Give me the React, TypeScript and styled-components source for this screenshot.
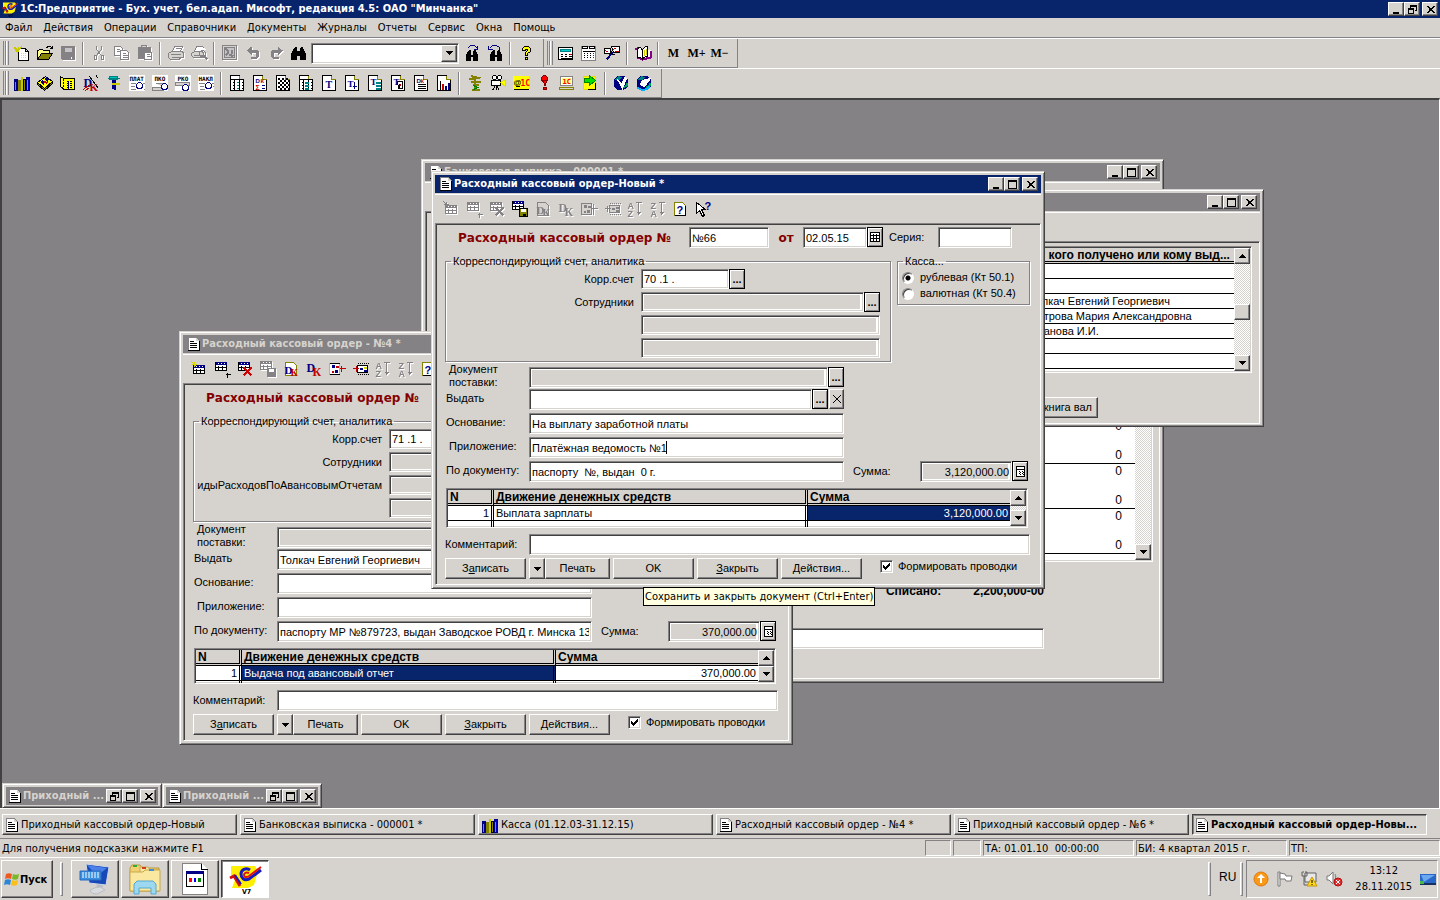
import React from "react";
import styled, { createGlobalStyle, css } from "styled-components";

const face = "#d6d3ce";
const shade = "#848284";
const dark = "#424142";
const navy = "#08246b";
const ui = `"DejaVu Sans Condensed", "Noto Sans", sans-serif`;
const form = `"Liberation Sans", sans-serif`;

const Global = createGlobalStyle`
  *, *::before, *::after { box-sizing: border-box; }
  body { margin: 0; background: ${shade}; color: #000; font: 11px/13px ${ui}; }
  button, input, select { font: inherit; color: inherit; border-radius: 0; margin: 0; }
  button { padding: 0; background: ${face}; }
  a { color: inherit; text-decoration: none; }
`;

const raised = css`
  border: 1px solid;
  border-color: #fff ${dark} ${dark} #fff;
  box-shadow: inset -1px -1px 0 ${shade};
`;
const sunken = css`
  border: 1px solid;
  border-color: ${shade} #fff #fff ${shade};
  box-shadow: inset 1px 1px 0 ${dark}, inset -1px -1px 0 ${face};
`;
const dither = css`
  background: conic-gradient(#fff 25%, ${face} 0 50%, #fff 0 75%, ${face} 0) 0 0 / 2px 2px;
`;

/* ---------- icons ---------- */

const Svg = styled.svg<{ $off?: boolean }>`
  display: block;
  flex: none;
  overflow: visible;
  ${(p) => p.$off && css`filter: drop-shadow(1px 1px 0 #fff);`}
`;

const K = "#000";
const G = "#848284";
const N = "#000084";
const R = "#c00000";
const Y = "#ffff00";
const T = "#008284";

type TextProps = { x: number; y: number; s: number; c?: string; f?: string; children: React.ReactNode };
const Letter = ({ x, y, s, c = K, f = form, children }: TextProps) => (
  <text x={x} y={y} fontSize={s} fontWeight="bold" fontFamily={f} fill={c} stroke="none">{children}</text>
);
const serif = '"Liberation Serif", serif';
const mono = '"DejaVu Sans Mono", monospace';

const page = (
  <>
    <path d="M1 0h9l4 4v11h-13z" fill="#fff" />
    <path d="M10 0v4h4" fill={face} stroke="#848200" />
  </>
);
const tableRows = (c: string, head: string) => (
  <>
    <path d="M2 2h11v8h-11z" fill="#fff" stroke={c} />
    <path d="M2 2h11M2 3h11M2 4h11" stroke={head} />
    <path d="M4 3h1M7 3h1M10 3h1" stroke="#fff" />
    <path d="M2 7h11M5 5v5M9 5v5" stroke={c} />
  </>
);
const globe = (
  <>
    <circle cx="7.5" cy="7.5" r="7.5" fill="#000084" stroke="none" />
    <path d="M2 4l3-3 3 1-2 2z" fill="#008284" stroke="#008284" />
    <path d="M10 12l3-2v-3" stroke="#00a060" strokeWidth="2" />
  </>
);
const binoculars = (
  <path d="M2 8l2-3h2v4h3V5h2l2 3v6H9v-4H6v4H2z M4 4h2 M9 4h2" fill={K} />
);
const slip = <rect x="-.5" y="-.5" width="16" height="16" fill="#fff" stroke="none" />;
const sheet = (body: React.ReactNode) => (
  <>
    {page}
    {body}
  </>
);

const art: Record<string, React.ReactNode> = {
  new: (<><path d="M4 3h7l3 3v9h-10z M11 3v3h3" fill="#fff" /><path d="M6 8h6M6 10h6M6 12h6" stroke={face} strokeDasharray="1 1" /><path d="M0 2l4 4M4 1v4M7 1l-3 4M0 5h4M2 7l2-2" stroke="#c8c800" strokeWidth="1.5" /></>),
  open: (<><path d="M0 14V5h1l1-1h3l1 1h6v3" fill="#ffff84" stroke={K} /><path d="M0 14l4-6h11l-4 6z" fill="#848200" stroke={K} /><path d="M9 2l2-1h2l2 2M15 0v3h-3" /></>),
  save: (<><path d="M1 1h13v13h-12l-1-1z" fill={G} stroke={G} /><path d="M4 2h7v4h-7z" fill="#c6c3c6" stroke="none" /><path d="M11 11v2" stroke="#fff" /></>),
  cut: (<g stroke={G}><path d="M5 0v4l5 6M10 0v4l-5 6" /><path d="M3 10h2v4h-2zM10 10h2v4h-2z" /></g>),
  copy: (<g stroke={G}><path d="M0 1h6l2 2v7h-8zM2 4h3M2 6h4" fill="#fff" /><path d="M6 5h6l2 2v7h-8zM8 8h3M8 10h5M8 12h5" fill="#fff" /></g>),
  paste: (<g stroke={G}><path d="M1 2h12v11h-12z" fill={G} /><path d="M4 0h5v2h-5z" fill={face} /><path d="M7 7h7v7h-7zM9 9h3M9 11h4" fill="#fff" /></g>),
  print: (<g stroke={G}><path d="M4 6l2-5h8l-2 5M7 3h5" fill="#fff" /><path d="M0 8l3-2h11l1 2v4h-3l-1 2h-9l-2-2z" fill={face} /><path d="M2 9h10M3 12h8" strokeWidth="1" /></g>),
  preview: (<g stroke={G}><path d="M3 6l2-5h6l2 2" fill="#fff" /><path d="M0 8l3-2h8l1 2v4h-10l-2-2zM2 10h9" fill={face} /><circle cx="11" cy="8" r="3" /><path d="M13 11l3 3" strokeWidth="2" /></g>),
  frame: (<g stroke={G}><path d="M0 0h14v14h-14z" fill={face} /><path d="M2 2h10v10h-10z" fill="#c6c3c6" /><path d="M3 3l2 2v3l-2 2M9 4v4M7 9l4 2" strokeWidth="2" /></g>),
  undo: (<path d="M1 5l5-4v3h5l2 2v5l-2 2h-6v-2h5v-4h-4v3z" stroke="none" fill={G} />),
  redo: (<path d="M14 5l-5-4v3h-5l-2 2v5l2 2h6v-2h-5v-4h4v3z" stroke="none" fill={G} />),
  find: <g transform="translate(-1 0)"><path d="M1 9l3-6h2v3h4V3h2l3 6v5h-5v-4H6v4H1z M4 2h2 M10 2h2" fill={K} /></g>,
  findNext: (<><g transform="translate(0 1)">{binoculars}</g><path d="M3 3l3-3h4l3 3M13 0v4h-4" stroke={N} /></>),
  findPrev: (<><g transform="translate(1 1)">{binoculars}</g><path d="M12 4V2l-3-2H5L2 3M1 0v4h4" stroke={N} /></>),
  help: (<><path d="M4 5V3l2-2h4l2 2v3l-3 2v2H7V7l2-2V4H7v1z" fill={Y} /><path d="M7 12h2v2h-2z" fill={Y} /></>),
  calc: (<><path d="M0 2h14v12h-14z" fill="#fff" /><path d="M2 4h10v2h-10z" fill="#00d0d0" stroke={T} /><path d="M2 9h2M6 9h2M10 9h3M2 11h2M6 11h2M10 11h3M2 13h11" /><path d="M11 9h2" stroke={R} /></>),
  calc2: (<><path d="M0 1h14v14h-14z" fill="#fff" stroke={G} /><path d="M1 1h5v2h-5zM8 1h5v2h-5zM1 6h12" /><path d="M2 8h1M5 8h1M8 8h1M2 10h1M5 10h1M8 10h1M2 12h1M5 12h1M8 12h1" /><path d="M11 8h1M11 10h1M11 12h1" stroke={R} /></>),
  tools: (<><path d="M0 3h6v5h-6zM7 1h8v6h-6z" fill="#fff" /><path d="M1 5l3 2M9 4l3-2M10 6h4" stroke={R} /><path d="M8 7l-6 7" stroke={N} strokeWidth="2" /><path d="M3 8l8 1M6 5l2 2" /></>),
  book: (<><path d="M0 4l2-1v9l5 2 8-2V5" fill="#fff" stroke="#840084" strokeWidth="2" /><path d="M2 3c3-2 4 0 5 2v9c-1-2-3-3-5-2zM7 5c1-3 3-4 5-4v10c-2 0-4 1-5 3z" fill="#fff" /><path d="M9 4v6M11 3v6" stroke="#d0d000" /></>),

  shelf: (<><path d="M0 4h3v11h-3z" fill={N} stroke={N} /><path d="M4 5h2v10h-2z" fill="#848200" stroke="#848200" /><path d="M7 2h1v13h-1z" fill={Y} stroke="#c8c800" /><path d="M9 4h2v11h-2z" fill="#848200" /><path d="M12 2h3v13h-3z" fill="#0000c6" stroke={N} /><path d="M1 6v8M13 4v10" stroke="#00c0c0" /></>),
  cubes: (<><path d="M0 7l8-6 7 5-8 7z" fill="#ffff00" /><path d="M0 7v2l7 6 8-7V6l-8 7z" fill="#848200" /><path d="M4 6l3 2M8 3l3 2" stroke={N} strokeWidth="3" /><path d="M7 6l3 2" stroke={R} strokeWidth="2" /></>),
  journal: (<><path d="M0 1l3 2h11v11h-10l-4-3z" fill="#ffff00" /><path d="M3 3v11M6 6h6M6 8h6M6 10h6M6 12h6" strokeDasharray="2 1" /><path d="M8 5v8" stroke={N} /></>),
  dkPen: (<><Letter x={0} y={11} s={12} c={N} f={serif}>D</Letter><Letter x={6} y={15} s={11} c={R} f={serif}>K</Letter><path d="M6 1l9 12M13 0l1 3" /><path d="M0 14l6-5M2 15l4-3" stroke={R} /></>),
  plan: (<><path d="M1 3h12M3 1h8v3h-8z" fill="#00c0c0" stroke="#008284" /><path d="M6 4v9M8 4v10" stroke={N} strokeWidth="2" /><path d="M5 8h8" stroke="#c8c800" strokeWidth="2" /></>),
  plat: <>{slip}<Letter x={0} y={5} s={6} f={mono}>ПЛАТ</Letter><path d="M1 8h5M1 11h4M1 14h5M13 8h2M14 14h1" stroke={G} /><circle cx="10" cy="10" r="3" stroke={N} /></>,
  pko: <>{slip}<Letter x={2} y={5} s={6} f={mono}>ПКО</Letter><path d="M0 12h11v3h-11zM3 8h7v3" stroke={G} fill={face} /><circle cx="12" cy="11" r="3" stroke={N} fill="#fff" /></>,
  rko: <>{slip}<Letter x={2} y={5} s={6} f={mono}>РКО</Letter><path d="M0 7h14v3h-14z" stroke={G} fill={face} /><circle cx="10" cy="12" r="3" stroke={N} fill="#fff" /></>,
  nakl: <>{slip}<Letter x={0} y={5} s={6} f={mono}>НАКЛ</Letter><path d="M0 8h6M1 11h4M1 14h5M13 8h2M14 11h1" stroke={G} /><circle cx="10" cy="10" r="3" stroke={N} /></>,

  r1: sheet(<><path d="M1 4h13M5 4v11M10 4v11M3 7h1M3 10h1M3 13h1M12 7h1M12 10h1M12 13h1" /><path d="M7 7h2M7 10h2M7 13h2" stroke={T} /></>),
  r2: sheet(<><Letter x={3} y={7} s={6} c={N}>D</Letter><Letter x={8} y={7} s={6} c={R}>К</Letter><Letter x={3} y={14} s={7} c={R}>Σ</Letter><path d="M9 10h3M9 13h3" stroke={N} /></>),
  r3: sheet(<><path d="M2 3h12M2 7h12M2 11h12" strokeDasharray="2 2" strokeWidth="2" /><path d="M4 5h10M4 9h10M4 13h10" strokeDasharray="2 2" strokeWidth="2" /></>),
  r4: sheet(<><path d="M1 4h13M5 4v11M10 4v11" /><path d="M6 7h4M6 10h4M6 13h4" stroke={T} strokeWidth="2" /><path d="M3 7h1M3 10h1M3 13h1M12 7h1M12 10h1M12 13h1" /></>),
  r5: sheet(<Letter x={4} y={12} s={10} c={N} f={serif}>T</Letter>),
  r6: sheet(<><Letter x={3} y={11} s={9} c={N} f={serif}>T</Letter><path d="M10 6v7M8 11h4" stroke={N} /></>),
  r7: sheet(<><Letter x={3} y={9} s={9} c={N} f={serif}>T</Letter><path d="M8 7h5M8 10h5M8 13h5" stroke={T} strokeWidth="2" /></>),
  r8: sheet(<><Letter x={3} y={9} s={9} c={N} f={serif}>T</Letter><path d="M7 6h5v7h-4zM9 8v5" /><path d="M10 8v2" stroke={R} /></>),
  r9: sheet(<><Letter x={3} y={7} s={6} c={N}>D</Letter><Letter x={7} y={7} s={6} c={R}>К</Letter><path d="M4 9h8M4 11h8M4 13h8" /></>),
  r10: sheet(<><path d="M4 5v9" /><path d="M6 8v6" stroke={R} strokeWidth="2" /><path d="M9 10v4M12 7v7" stroke={N} strokeWidth="2" /></>),

  caduceus: (<><path d="M7 0v15" stroke="#848200" strokeWidth="2" /><path d="M1 3h5l-1-2 4 1 4 1M3 6h10M5 9h6M4 14h8" stroke="#848200" strokeWidth="2" /><path d="M6 10l4 2-4 2" stroke="#008200" /></>),
  camera: (<><circle cx="4" cy="2" r="2" fill="#fff" /><circle cx="9" cy="2" r="2" fill="#fff" /><path d="M1 5h9v5h-9z" fill="#fff" /><path d="M10 7l5-3v7z" fill={Y} stroke="#e0e000" /><path d="M5 10l-3 5M6 10l3 5M6 10v4" /></>),
  mail1c: (<><rect x="-.5" y="0" width="16" height="13" fill={Y} stroke="none" /><Letter x={0} y={9} s={8}>@</Letter><Letter x={7} y={10} s={8} f={mono} c="#ff0000">1С</Letter><path d="M0 14h15M2 11h4" /></>),
  bang: (<><circle cx="8" cy="3" r="3" fill="#ff0000" stroke="#840000" /><path d="M7 5h3l-1 5h-1z" fill="#ff0000" stroke="#840000" /><path d="M7 12h3v2h-3z" fill="#ff0000" stroke="#840000" /></>),
  pc: (<><path d="M1 1h12v9h-12z" fill="#fff" stroke={G} /><path d="M3 3h8v5h-8z" fill="#ffff84" stroke="#ffff84" /><Letter x={3} y={8} s={7} c="#ff0000" f={mono}>1С</Letter><path d="M0 12h14v2h-14z" fill={face} stroke="#848200" /></>),
  exportArrow: (<><path d="M1 1h12v13h-12z" fill={Y} stroke="#e0e000" /><path d="M2 3h5V0l6 5-6 5V7H2z" fill="#00e000" stroke="#008200" /><path d="M13 7v7h-8" stroke={K} /></>),
  globe1: (<>{globe}<path d="M4 4l4 5 3-7 2 1-4 10z" fill="#fff" stroke="#fff" /></>),
  globe2: (<>{globe}<path d="M4 9l4 2 6-8-8 2z" fill="#fff" stroke="#fff" /><path d="M1 12c4 4 9 3 12-1" stroke="#00b0ff" strokeWidth="2" /></>),

  insert: (<><g transform="translate(0 2)">{tableRows(K, N)}</g><path d="M0 0l5 5M3 0v5M0 3h5" stroke="#d8d800" /></>),
  insertOff: (<><g transform="translate(0 2)">{tableRows(G, G)}</g><path d="M0 0l5 5M3 0v5M0 3h5" stroke={G} /></>),
  add: (<><g transform="translate(-1 -1)">{tableRows(K, N)}</g><path d="M11 13h5M13 11v5" /></>),
  addOff: (<><g transform="translate(-1 -1)">{tableRows(G, G)}</g><path d="M11 13h5M13 11v5" stroke={G} /></>),
  del: (<><g transform="translate(-1 -1)">{tableRows(K, N)}</g><path d="M6 6l8 8M14 6l-8 8" stroke="#d00000" strokeWidth="2" /></>),
  delOff: (<><g transform="translate(-1 -1)">{tableRows(G, G)}</g><path d="M6 6l8 8M14 6l-8 8" stroke={G} strokeWidth="2" /></>),
  store: (<><g transform="translate(-2 -2)">{tableRows(K, N)}</g><path d="M7 7h8v8h-8z" fill="#848200" /><path d="M9 8h4v2h-4z" fill="#fff" stroke="#fff" /><path d="M10 13h3" strokeWidth="2" /></>),
  storeOff: (<><g transform="translate(-2 -2)">{tableRows(G, G)}</g><path d="M7 7h8v8h-8z" fill={G} stroke={G} /><path d="M9 8h4v2h-4z" fill="#fff" stroke="#fff" /></>),
  dkDoc: (<><path d="M2 1h8l3 3v10h-11z" fill="#fff" stroke="#848200" /><Letter x={1} y={12} s={11} c={N} f={serif}>D</Letter><Letter x={7} y={14} s={10} c={R} f={serif}>К</Letter></>),
  dkDocOff: (<><path d="M2 1h8l3 3v10h-11z" fill={face} stroke={G} /><Letter x={1} y={12} s={11} c={G} f={serif}>D</Letter><Letter x={7} y={14} s={10} c={G} f={serif}>К</Letter></>),
  dk: (<><Letter x={0} y={10} s={12} c={N} f={serif}>D</Letter><Letter x={6} y={14} s={12} c={R} f={serif}>К</Letter></>),
  dkOff: (<><Letter x={0} y={10} s={12} c={G} f={serif}>D</Letter><Letter x={6} y={14} s={12} c={G} f={serif}>К</Letter></>),
  from: (<><path d="M0 2h10v11h-10z" fill="#fff" stroke="#c8c800" /><path d="M0 2h10M0 13h10" /><path d="M2 5h3M5 10h3" stroke={N} strokeWidth="3" /><path d="M6 5h3M2 10h2" stroke={R} strokeWidth="2" /><path d="M10 7h6M12 4v6" stroke={R} /></>),
  fromOff: (<g stroke={G}><path d="M0 2h10v11h-10z" fill={face} /><path d="M2 5h3M5 10h3" strokeWidth="3" /><path d="M6 5h3M2 10h2" strokeWidth="2" /><path d="M10 7h6M12 2v11" /></g>),
  to: (<><path d="M5 2h11M5 13h11" strokeDasharray="1 1" /><path d="M5 4h10v7h-10z" fill="#fff" /><path d="M7 7h3M11 9h3" stroke={N} strokeWidth="2" /><path d="M11 6h3" stroke="#d8d800" strokeWidth="2" /><path d="M0 7h6M4 4v6" stroke={R} /></>),
  toOff: (<g stroke={G}><path d="M5 2h11M5 13h11" strokeDasharray="1 1" /><path d="M5 4h10v7h-10z" fill={face} /><path d="M7 7h3M11 9h3M11 6h3" strokeWidth="2" /><path d="M0 7h6M3 4v6" /></g>),
  azOff: (<><Letter x={0} y={7} s={9} c={G}>A</Letter><Letter x={0} y={15} s={9} c={G}>Z</Letter><path d="M8 1h6M11 1v12M9 11h4M10 12h2" stroke={G} /></>),
  zaOff: (<><Letter x={0} y={7} s={9} c={G}>Z</Letter><Letter x={0} y={15} s={9} c={G}>A</Letter><path d="M8 1h6M11 1v12M9 11h4M10 12h2" stroke={G} /></>),
  helpDoc: (<><path d="M1 1h8l3 3v10h-11z" fill="#fff" stroke="#848200" /><path d="M12 4v10h-11" /><Letter x={3} y={12} s={11} c={N}>?</Letter></>),
  helpPtr: (<><path d="M0 1v11l3-3 3 6 2-1-3-6h4z" fill="#fff" /><Letter x={8} y={8} s={11} c={N}>?</Letter></>),
};

const names: Record<string, string> = {
  new: "Новый", open: "Открыть", save: "Сохранить", cut: "Вырезать", copy: "Копировать", paste: "Вставить",
  print: "Печать", preview: "Просмотр", find: "Найти", help: "Помощь", calc: "Калькулятор", undo: "Отменить", redo: "Вернуть",
};

const IconButton = styled.button`
  width: 23px;
  height: 24px;
  border: 0;
  display: grid;
  place-items: center;
`;

const Tool = ({ name, off }: { name: string; off?: boolean }) => (
  <IconButton type="button" aria-label={names[name] ?? name}>
    <Svg width="16" height="16" viewBox="-0.5 -0.5 16 16" fill="none" stroke="#000" shapeRendering="crispEdges" $off={off}>
      {art[name]}
    </Svg>
  </IconButton>
);

const DocIcon = () => (
  <Svg width="12" height="14" viewBox="0 0 12 14" shapeRendering="crispEdges">
    <path d="M0 0h8l4 4v10h-12z" fill={G} />
    <path d="M1 1h7v3h3v9h-10z" fill="#fff" />
    <path d="M8 1h1v1h1v1h1v1h-3z" fill={face} />
    <path d="M11 4h1v10h-12v-1h11z" fill="#000" />
    <path d="M2 4h4v1h-4zM2 6h7v1h-7zM2 8h7v1h-7zM2 10h7v1h-7z" fill="#000" />
  </Svg>
);

const BooksIcon = () => (
  <Svg width="16" height="16" viewBox="-0.5 -0.5 16 16" fill="none" stroke="#000" shapeRendering="crispEdges">{art.shelf}</Svg>
);

const OneC = ({ size }: { size: number }) => (
  <Svg width={size} height={size} viewBox="0 0 32 32">
    <path d="M2 3h24l3 5-4 14-6 3H3l3-8-4-5z" fill="#ffef00" />
    <path d="M1 15l4-2 6 10" fill="none" stroke="#d01010" strokeWidth="3" />
    <path d="M6 12l6 9" fill="none" stroke="#1818c0" strokeWidth="2" />
    <path d="M21 7c-4-3-9 0-9 4s3 7 8 5l12-9" fill="none" stroke="#1818c0" strokeWidth="3" />
    <path d="M20 10c-3-1-5 0-5 2s2 3 5 1l12-9" fill="none" stroke="#e01010" strokeWidth="2" />
    <text x="13" y="31" fontSize="7" fontWeight="bold" fontFamily={ui} fill="#000">V7</text>
  </Svg>
);

/* ---------- application frame ---------- */

const Shell = styled.div`
  min-height: 100vh;
  display: flex;
  flex-direction: column;
  background: ${face};
  overflow: hidden;
`;

const AppTitle = styled.header`
  height: 18px;
  padding: 0 2px;
  display: flex;
  align-items: center;
  gap: 2px;
  background: ${navy};
  color: #fff;
  h1 { margin: 0; flex: 1; font-size: 11px; line-height: 18px; font-weight: bold; white-space: nowrap; }
`;

const Controls = styled.div`
  display: flex;
  button:last-child { margin-left: 2px; }
`;

const ControlButton = styled.button`
  ${raised}
  width: 16px;
  height: 14px;
  display: grid;
  place-items: center;
`;

const controlPaths = {
  min: "M2 8h6v2h-6z",
  max: "M1 1h9v9h-9zM2 3v6h7v-6z",
  restore: "M3 1h7v6h-2v-1h1v-3h-5v1h-1zM1 4h6v6h-6zM2 6v3h4v-3z",
  close: "M1 2h2l2 2h1l2-2h2l-3 3v1l3 3h-2l-2-2h-1l-2 2h-2l3-3v-1z",
};
const controlNames = { min: "Свернуть", max: "Развернуть", restore: "Восстановить", close: "Закрыть" };

const WindowControls = ({ kinds }: { kinds: (keyof typeof controlPaths)[] }) => (
  <Controls>
    {kinds.map((k) => (
      <ControlButton type="button" key={k} aria-label={controlNames[k]}>
        <Svg width="11" height="11" viewBox="0 0 11 11" shapeRendering="crispEdges">
          <path d={controlPaths[k]} fillRule="evenodd" fill="#000" />
        </Svg>
      </ControlButton>
    ))}
  </Controls>
);

const MenuBar = styled.nav`
  height: 20px;
  padding-left: 5px;
  display: flex;
  gap: 11px;
  line-height: 20px;
  border-bottom: 1px solid ${shade};
`;

const ToolRow = styled.div`
  display: flex;
  height: 30px;
  border-top: 1px solid #fff;
`;

const Band = styled.div`
  display: flex;
  align-items: center;
  height: 29px;
  padding: 0 6px 0 10px;
  border-right: 1px solid ${shade};
  border-bottom: 1px solid ${shade};
  position: relative;
  &::before {
    content: "";
    position: absolute;
    left: 3px;
    top: 2px;
    bottom: 2px;
    width: 6px;
    border: solid;
    border-width: 0 1px;
    border-color: #fff ${shade};
    background: linear-gradient(90deg, ${face} 1px, ${shade} 1px 2px, #fff 2px 3px, ${face} 3px);
  }
`;

const Divider = styled.span`
  width: 2px;
  height: 23px;
  margin: 0 3px;
  border-left: 1px solid ${shade};
  border-right: 1px solid #fff;
`;

const ComboBox = styled.div`
  ${sunken}
  width: 148px;
  height: 21px;
  padding: 1px;
  display: flex;
  background: #fff;
  margin: 0 1px;
  input { flex: 1; min-width: 0; border: 0; background: none; outline: 0; padding: 0 2px; }
  button { ${raised} width: 16px; display: grid; place-items: center; }
`;

const MemButton = styled.button`
  width: 23px;
  height: 24px;
  border: 0;
  font: bold 12px/24px "Liberation Serif", serif;
`;

const Arrow = ({ up }: { up?: boolean }) => (
  <Svg width="7" height="4" viewBox="0 0 7 4" shapeRendering="crispEdges">
    <path d={up ? "M3 0h1v1h1v1h1v1h1v1h-7v-1h1v-1h1v-1h1z" : "M0 0h7v1h-1v1h-1v1h-1v1h-1v-1h-1v-1h-1v-1h-1z"} fill="#000" />
  </Svg>
);

const Desktop = styled.main`
  position: relative;
  flex: 1;
  min-height: 710px;
  background: ${shade};
  border: solid;
  border-width: 2px 1px 0 2px;
  border-color: ${dark} #fff ${face} ${dark};
  overflow: hidden;
`;

/* ---------- child windows ---------- */

const Frame = styled.section<{ $x: number; $y: number; $w: number; $h?: number }>`
  position: absolute;
  left: ${(p) => p.$x}px;
  top: ${(p) => p.$y}px;
  width: ${(p) => p.$w}px;
  height: ${(p) => (p.$h ? p.$h + "px" : "auto")};
  display: flex;
  flex-direction: column;
  padding: 3px;
  background: ${face};
  border: 1px solid;
  border-color: ${face} ${dark} ${dark} ${face};
  box-shadow: inset 1px 1px 0 #fff, inset -1px -1px 0 ${shade};
`;

const Caption = styled.header<{ $active?: boolean }>`
  flex: none;
  height: 18px;
  padding: 0 3px 0 5px;
  display: flex;
  align-items: center;
  gap: 2px;
  background: ${(p) => (p.$active ? navy : shade)};
  color: ${(p) => (p.$active ? "#fff" : face)};
  h2 { margin: 0; flex: 1; min-width: 0; font-size: 11px; line-height: 18px; font-weight: bold; white-space: nowrap; overflow: hidden; }
`;

const InnerTools = styled.div`
  flex: none;
  height: 29px;
  margin-top: 1px;
  padding-left: 4px;
  display: flex;
  align-items: center;
  border-top: 1px solid #fff;
`;

const Client = styled.div`
  flex: 1;
  display: flex;
  flex-direction: column;
  padding: 3px 10px 5px 9px;
  border: 1px solid;
  border-color: ${shade} #fff #fff ${shade};
  box-shadow: inset 1px 1px 0 ${dark};
  font: 11px/13px ${form};
`;

/* ---------- form parts ---------- */

const Input = styled.input<{ $locked?: boolean; $w?: number; $right?: boolean }>`
  ${sunken}
  height: 21px;
  min-width: 0;
  width: ${(p) => (p.$w ? p.$w + "px" : "auto")};
  flex: ${(p) => (p.$w ? "none" : "1")};
  padding: 1px 2px;
  outline: 0;
  background: #fff;
  text-align: ${(p) => (p.$right ? "right" : "left")};
  ${(p) => p.$locked && css`
    background: ${face};
    box-shadow: inset 1px 1px 0 ${dark}, inset -1px -1px 0 ${face}, inset 2px 2px 0 #fff, inset -3px -2px 0 #fff;
  `}
`;

const Combo = styled.div<{ $w?: number }>`
  display: flex;
  width: ${(p) => (p.$w ? p.$w + "px" : "auto")};
`;

const PickButton = styled.button`
  width: 16px;
  height: 20px;
  border: 1px solid #000;
  box-shadow: inset 1px 1px 0 #fff, inset -1px -1px 0 ${shade};
  display: grid;
  place-items: center;
  font-weight: bold;
  line-height: 14px;
`;

const ClearButton = styled.button`
  ${raised}
  width: 15px;
  height: 20px;
  margin-left: 1px;
  display: grid;
  place-items: center;
`;

const Calendar = () => (
  <Svg width="10" height="10" viewBox="-0.5 -0.5 10 10" shapeRendering="crispEdges" fill="#fff" stroke="#000">
    <path d="M0 0h9v9h-9zM0 3h9M0 6h9M3 1v8M6 1v8" />
  </Svg>
);
const Calc = () => (
  <Svg width="9" height="11" viewBox="-0.5 -0.5 9 11" shapeRendering="crispEdges" fill="#fff" stroke="#000">
    <path d="M0 0h8v10h-8zM0 3h8M2 5h1M5 5h1M2 7h1M5 7h1M3 6h1M6 6h1M3 8h1M6 8h1" />
  </Svg>
);

const HeadRow = styled.div`
  display: flex;
  align-items: center;
  height: 21px;
`;
const DocTitle = styled.label`
  width: 244px;
  padding-left: 13px;
  white-space: nowrap;
  font: bold 12px/16px "DejaVu Sans", sans-serif;
  color: #840000;
`;
const From = styled.label`
  width: 34px;
  text-align: center;
  font: bold 12px/16px "DejaVu Sans", sans-serif;
  color: #840000;
`;
const SeriesLabel = styled.label`
  width: 55px;
  padding-left: 6px;
`;

const Groups = styled.div`
  display: flex;
  align-items: flex-start;
  gap: 6px;
  margin: 7px 0 3px;
`;
const Group = styled.fieldset`
  margin: 0;
  min-width: 0;
  padding: 0;
  border: 1px solid ${shade};
  box-shadow: inset 1px 1px 0 #fff, 1px 1px 0 #fff;
  legend { margin-left: 5px; padding: 0 2px; line-height: 13px; }
`;
const AccountGroup = styled(Group)`width: 446px;`;
const AccountGrid = styled.div`
  display: grid;
  grid-template-columns: 188px 1fr;
  gap: 3px 7px;
  align-items: center;
  padding: 1px 10px 3px 0;
  label { text-align: right; white-space: nowrap; }
  input { height: 20px; width: 100%; }
`;
const CashGroup = styled(Group)`flex: 1;`;
const Radios = styled.div`
  display: grid;
  gap: 3px;
  padding: 3px 4px 4px;
`;
const Choice = styled.label`
  display: flex;
  align-items: center;
  gap: 6px;
  white-space: nowrap;
`;
const Radio = styled.input`
  appearance: none;
  width: 12px;
  height: 12px;
  border-radius: 50%;
  border: 1px solid;
  border-color: ${shade} #fff #fff ${shade};
  background: #fff;
  box-shadow: inset 1px 1px 0 ${dark};
  &:checked { background: radial-gradient(circle, #000 2px, #fff 3px); }
`;

const Rows = styled.div`
  display: grid;
  gap: 3px;
`;
const Row = styled.div`
  display: grid;
  grid-template-columns: 84px 315px auto 1fr;
  align-items: center;
  height: 21px;
`;
const RowLabel = styled.label<{ $in?: boolean }>`
  padding-left: ${(p) => (p.$in ? 4 : 1)}px;
  margin-top: -2px;
`;
const Cell = styled.div`
  display: flex;
  position: relative;
`;
const Caret = styled.span`
  position: absolute;
  left: 137px;
  top: 4px;
  width: 1px;
  height: 13px;
  background: #000;
`;
const SumLabel = styled.label`
  padding-left: 9px;
`;
const SumBox = styled(Combo)`
  justify-self: end;
  margin-right: 2px;
`;

const GridFrame = styled.div<{ $h: number }>`
  ${sunken}
  height: ${(p) => p.$h}px;
  padding: 1px;
  display: flex;
  overflow: hidden;
  background: #fff;
`;
const FormGrid = styled(GridFrame)`margin: 6px 2px 6px 1px;`;

const Grid = styled.table`
  flex: 1;
  min-width: 0;
  align-self: flex-start;
  table-layout: fixed;
  border-collapse: separate;
  border-spacing: 0;
  th, td { padding: 0 2px; text-align: left; white-space: nowrap; overflow: hidden; }
  th { height: 16px; background: ${face}; font-size: 12px; line-height: 12px; border-bottom: 3px double #000; }
  td { height: 15px; line-height: 14px; border-bottom: 1px solid #000; }
  th:not(:last-child), td:not(:last-child) { border-right: 3px double #000; }
`;
const Td = styled.td<{ $on?: boolean }>`
  && { text-align: ${(p) => (p.align === "right" ? "right" : "left")}; }
  ${(p) => p.$on && css`background: ${navy}; color: #fff;`}
`;

const Track = styled.div`
  ${dither}
  width: 16px;
  flex: none;
  display: flex;
  flex-direction: column;
`;
const ScrollButton = styled.button`
  ${raised}
  flex: none;
  height: 16px;
  display: grid;
  place-items: center;
`;
const Thumb = styled.div`
  ${raised}
  height: 16px;
  background: ${face};
`;
const Space = styled.span<{ $n: number }>`flex: ${(p) => p.$n};`;

const Scroll = ({ before, after }: { before?: number; after?: number }) => (
  <Track>
    <ScrollButton type="button" aria-label="Вверх"><Arrow up /></ScrollButton>
    <Space $n={before ?? 1} />
    {before && <Thumb />}
    {after && <Space $n={after} />}
    <ScrollButton type="button" aria-label="Вниз"><Arrow /></ScrollButton>
  </Track>
);

const CommentRow = styled.div`
  display: grid;
  grid-template-columns: 84px 1fr;
  align-items: center;
`;
const Actions = styled.div`
  display: flex;
  margin-top: 3px;
  gap: 3px;
`;
const Push = styled.button<{ $w: number }>`
  ${raised}
  width: ${(p) => p.$w}px;
  height: 21px;
`;
const Split = styled.div`
  display: flex;
  button { display: grid; place-items: center; }
`;
const Posting = styled(Choice)`
  margin: -4px 0 0 15px;
  gap: 5px;
`;
const CheckBox = styled.span`
  position: relative;
  display: block;
  width: 13px;
  height: 13px;
  input { ${sunken} appearance: none; display: block; width: 13px; height: 13px; background: #fff; }
  svg { position: absolute; left: 3px; top: 3px; pointer-events: none; }
`;

type Order = {
  id: string; x: number; y: number; title: string; active?: boolean; tools: string[]; number: string; account: string;
  third?: string; to: string; basis: string; enclosure: string; by: string; sum: string; move: string; picked: "move" | "sum"; gridHeight: number;
};

const OrderWindow = (o: Order) => (
  <Frame $x={o.x} $y={o.y} $w={614}>
    <Caption $active={o.active}>
      <DocIcon />
      <h2>{o.title}</h2>
      <WindowControls kinds={["min", "max", "close"]} />
    </Caption>
    <InnerTools>
      {o.tools.map((t) => <Tool key={t} name={t} off={t.endsWith("Off")} />)}
    </InnerTools>
    <Client>
      <HeadRow>
        <DocTitle htmlFor={o.id + "num"}>Расходный кассовый ордер №</DocTitle>
        <Input id={o.id + "num"} $w={80} defaultValue={o.number} />
        <From htmlFor={o.id + "date"}>от</From>
        <Combo $w={80}>
          <Input id={o.id + "date"} defaultValue="02.05.15" />
          <PickButton type="button" aria-label="Календарь"><Calendar /></PickButton>
        </Combo>
        <SeriesLabel htmlFor={o.id + "ser"}>Серия:</SeriesLabel>
        <Input id={o.id + "ser"} $w={74} />
      </HeadRow>
      <Groups>
        <AccountGroup>
          <legend>Корреспондирующий счет, аналитика</legend>
          <AccountGrid>
            <label htmlFor={o.id + "acc"}>Корр.счет</label>
            <Combo $w={104}>
              <Input id={o.id + "acc"} defaultValue={o.account} />
              <PickButton type="button" aria-label="Выбрать счет">...</PickButton>
            </Combo>
            <label htmlFor={o.id + "emp"}>Сотрудники</label>
            <Combo>
              <Input id={o.id + "emp"} $locked readOnly />
              <PickButton type="button" aria-label="Выбрать сотрудника">...</PickButton>
            </Combo>
            <label htmlFor={o.id + "a3"}>{o.third}</label>
            <Input id={o.id + "a3"} $locked readOnly />
            <label htmlFor={o.id + "a4"} />
            <Input id={o.id + "a4"} $locked readOnly />
          </AccountGrid>
        </AccountGroup>
        <CashGroup>
          <legend>Касса...</legend>
          <Radios>
            <Choice><Radio type="radio" name={o.id + "cash"} defaultChecked />рублевая (Кт 50.1)</Choice>
            <Choice><Radio type="radio" name={o.id + "cash"} />валютная (Кт 50.4)</Choice>
          </Radios>
        </CashGroup>
      </Groups>
      <Rows>
        <Row>
          <RowLabel $in htmlFor={o.id + "doc"}>Документ поставки:</RowLabel>
          <Cell>
            <Input id={o.id + "doc"} $locked readOnly />
            <PickButton type="button" aria-label="Выбрать документ">...</PickButton>
          </Cell>
        </Row>
        <Row>
          <RowLabel htmlFor={o.id + "to"}>Выдать</RowLabel>
          <Cell>
            <Input id={o.id + "to"} defaultValue={o.to} />
            <PickButton type="button" aria-label="Выбрать получателя">...</PickButton>
            <ClearButton type="button" aria-label="Очистить">
              <Svg width="8" height="8" viewBox="0 0 8 8" stroke="#000" shapeRendering="crispEdges"><path d="M0 0l8 8M8 0l-8 8" /></Svg>
            </ClearButton>
          </Cell>
        </Row>
        <Row>
          <RowLabel htmlFor={o.id + "basis"}>Основание:</RowLabel>
          <Cell><Input id={o.id + "basis"} defaultValue={o.basis} /></Cell>
        </Row>
        <Row>
          <RowLabel $in htmlFor={o.id + "enc"}>Приложение:</RowLabel>
          <Cell>
            <Input id={o.id + "enc"} defaultValue={o.enclosure} />
            {o.active && <Caret />}
          </Cell>
        </Row>
        <Row>
          <RowLabel htmlFor={o.id + "by"}>По документу:</RowLabel>
          <Cell><Input id={o.id + "by"} defaultValue={o.by} /></Cell>
          <SumLabel htmlFor={o.id + "sum"}>Сумма:</SumLabel>
          <SumBox $w={108}>
            <Input id={o.id + "sum"} $locked $right readOnly value={o.sum} />
            <PickButton type="button" aria-label="Калькулятор"><Calc /></PickButton>
          </SumBox>
        </Row>
      </Rows>
      <FormGrid $h={o.gridHeight}>
        <Grid>
          <colgroup><col width="46" /><col width="314" /><col /></colgroup>
          <thead><tr><th>N</th><th>Движение денежных средств</th><th>Сумма</th></tr></thead>
          <tbody>
            <tr><Td align="right">1</Td><Td $on={o.picked === "move"}>{o.move}</Td><Td align="right" $on={o.picked === "sum"}>{o.sum}</Td></tr>
            <tr><td /><td /><td /></tr>
          </tbody>
        </Grid>
        <Scroll />
      </FormGrid>
      <CommentRow>
        <label htmlFor={o.id + "note"}>Комментарий:</label>
        <Input id={o.id + "note"} />
      </CommentRow>
      <Actions>
        <Push type="button" $w={81}>З<u>а</u>писать</Push>
        <Split>
          <Push type="button" $w={16} aria-label="Варианты записи"><Arrow /></Push>
          <Push type="button" $w={65}>Печать</Push>
        </Split>
        <Push type="button" $w={81}>OK</Push>
        <Push type="button" $w={81}><u>З</u>акрыть</Push>
        <Push type="button" $w={81}><u>Д</u>ействия...</Push>
        <Posting>
          <CheckBox>
            <input type="checkbox" defaultChecked />
            <Svg width="7" height="7" viewBox="0 0 7 7" shapeRendering="crispEdges">
              <path d="M0 2h1v1h1v1h1v-1h1v-1h1v-1h1v-1h1v3h-1v1h-1v1h-1v1h-1v1h-1v-1h-1v-1h-1z" fill="#000" />
            </Svg>
          </CheckBox>
          Формировать проводки
        </Posting>
      </Actions>
    </Client>
  </Frame>
);

/* ---------- background windows ---------- */

const BankGrid = styled(GridFrame)`
  margin: 6px -4px 0 0;
  flex: none;
  td { height: 45px; line-height: 15px; }
  td:last-child { padding-right: 13px; }
`;
const Pair = styled.div`
  height: 44px;
  display: flex;
  flex-direction: column;
  justify-content: space-between;
  text-align: right;
  font-size: 12px;
`;
const Totals = styled.dl`
  display: flex;
  justify-content: flex-end;
  gap: 32px;
  margin: 22px 105px 0 0;
  font-weight: bold;
  font-size: 12px;
  line-height: 15px;
  dt, dd { margin: 0; }
`;
const BankNote = styled.div`
  display: flex;
  margin: 29px 105px 0 0;
`;
const BookGrid = styled(GridFrame)`
  margin: 1px -3px 0 0;
`;
const BookButton = styled.button`
  ${raised}
  align-self: flex-end;
  height: 21px;
  margin: 24px 151px 0 0;
  padding: 0 5px;
`;

const BankWindow = () => (
  <Frame $x={419} $y={59} $w={743} $h={524}>
    <Caption>
      <DocIcon />
      <h2>Банковская выписка - 000001 *</h2>
      <WindowControls kinds={["min", "max", "close"]} />
    </Caption>
    <InnerTools />
    <Client>
      <BankGrid $h={341}>
        <Grid>
          <colgroup><col /><col width="180" /></colgroup>
          <thead><tr><th>Содержание</th><th>Сумма</th></tr></thead>
          <tbody>
            {[1, 2, 3, 4, 5, 6, 7].map((n) => (
              <tr key={n}><td /><td><Pair><span>0</span><span>0</span></Pair></td></tr>
            ))}
            <tr><td /><td /></tr>
          </tbody>
        </Grid>
        <Scroll before={1} after={9} />
      </BankGrid>
      <Totals><dt>Списано:</dt><dd>2,200,000-00</dd></Totals>
      <BankNote><Input aria-label="Комментарий" /></BankNote>
    </Client>
  </Frame>
);

const BookWindow = () => (
  <Frame $x={758} $y={89} $w={504} $h={238}>
    <Caption>
      <DocIcon />
      <h2>Касса (01.12.03-31.12.15)</h2>
      <WindowControls kinds={["min", "max", "close"]} />
    </Caption>
    <InnerTools />
    <Client>
      <BookGrid $h={127}>
        <Grid>
          <colgroup><col /><col width="206" /></colgroup>
          <thead><tr><th>Документ</th><th>От кого получено или кому выд...</th></tr></thead>
          <tbody>
            {["", "", "Толкач Евгений Георгиевич", "Петрова Мария Александровна", "Иванова И.И.", "", "", ""].map((v, i) => (
              <tr key={i}><td /><td>{v}</td></tr>
            ))}
          </tbody>
        </Grid>
        <Scroll before={8} after={7} />
      </BookGrid>
      <BookButton type="button">Кассовая книга вал</BookButton>
    </Client>
  </Frame>
);

const MiniRow = styled.div`
  position: absolute;
  left: 0;
  bottom: 0;
  display: flex;
`;
const Mini = styled.div`
  width: 160px;
  height: 25px;
  padding: 3px;
  background: ${face};
  border: 1px solid;
  border-color: ${face} ${dark} ${dark} ${face};
  box-shadow: inset 1px 1px 0 #fff, inset -1px -1px 0 ${shade};
`;
const MiniCaption = styled(Caption)`
  padding: 0 2px 0 3px;
`;
const Tip = styled.div`
  position: absolute;
  left: 641px;
  top: 487px;
  padding: 1px;
  border: 1px solid #000;
  background: #ffffe1;
  line-height: 15px;
  white-space: nowrap;
`;

/* ---------- bottom bars ---------- */

const TabBar = styled.nav`
  display: grid;
  grid-template-columns: repeat(6, minmax(0, 1fr));
  gap: 3px;
  height: 31px;
  padding: 5px 13px 4px 2px;
  border-top: 1px solid #fff;
  border-bottom: 1px solid ${shade};
`;
const Tab = styled.button<{ $on?: boolean }>`
  ${raised}
  height: 21px;
  padding: 0 4px 0 3px;
  display: flex;
  align-items: center;
  gap: 3px;
  overflow: hidden;
  white-space: nowrap;
  ${(p) => p.$on && css`
    border-color: ${dark} #fff #fff ${dark};
    box-shadow: inset 1px 1px 0 ${shade};
    font-weight: bold;
  `}
`;
const Status = styled.footer`
  height: 19px;
  padding-left: 2px;
  display: flex;
  gap: 2px;
  align-items: center;
  border-bottom: 1px solid #fff;
  p { margin: 0; flex: 1; }
`;
const StatusCell = styled.span<{ $w: number }>`
  width: ${(p) => p.$w}px;
  height: 16px;
  padding-left: 1px;
  line-height: 15px;
  border: 1px solid;
  border-color: ${shade} #fff #fff ${shade};
  white-space: pre;
`;
const TaskBar = styled.footer`
  height: 42px;
  padding: 2px 2px 2px 1px;
  display: flex;
  align-items: center;
`;
const Start = styled.button`
  ${raised}
  width: 52px;
  height: 38px;
  display: flex;
  align-items: center;
  padding-left: 2px;
  font-weight: bold;
`;
const Bar = styled.span<{ $m: string }>`
  width: 3px;
  height: 34px;
  margin: ${(p) => p.$m};
  border: 1px solid;
  border-color: #fff ${shade} ${shade} #fff;
`;
const Launch = styled.button<{ $on?: boolean }>`
  ${raised}
  width: 48px;
  height: 38px;
  margin-right: 2px;
  display: grid;
  place-items: center;
  ${(p) => p.$on && css`
    background: #fff;
    border-color: ${dark} #fff #fff ${dark};
    box-shadow: inset 1px 1px 0 ${shade};
  `}
`;
const Filler = styled.span`flex: 1;`;
const Lang = styled.span`
  padding: 0 4px 4px 8px;
  font: 12px/14px ${form};
`;
const Tray = styled.div`
  display: flex;
  align-items: center;
  gap: 8px;
  height: 38px;
  margin-left: 3px;
  padding: 0 1px 0 6px;
  border: 1px solid;
  border-color: ${shade} #fff #fff ${shade};
  time { display: block; margin: 0 0 0 4px; text-align: center; line-height: 16px; }
`;

const main1 = ["new", "open", "save*", "|", "cut*", "copy*", "paste*", "|", "print*", "preview*", "|", "frame*", "undo*", "redo*", "find"];
const main2 = ["findNext", "findPrev", "|", "help"];
const main3 = ["calc", "calc2", "tools", "|", "book", "|"];
const main4 = ["shelf", "cubes", "journal", "dkPen", "plan", "plat", "pko", "rko", "nakl", "|", "r1", "r2", "r3", "r4", "r5", "r6", "r7", "r8", "r9", "r10", "|", "caduceus", "camera", "mail1c", "bang", "pc", "exportArrow", "|", "globe1", "globe2"];

const Tools = ({ list }: { list: string[] }) => (
  <>
    {list.map((t, i) => (t === "|" ? <Divider key={i} /> : <Tool key={t} name={t.replace("*", "")} off={t.endsWith("*")} />))}
  </>
);

const menu = ["Файл", "Действия", "Операции", "Справочники", "Документы", "Журналы", "Отчеты", "Сервис", "Окна", "Помощь"];
const tabs = ["Приходный кассовый ордер-Новый", "Банковская выписка - 000001 *", "Касса (01.12.03-31.12.15)", "Расходный кассовый ордер - №4 *", "Приходный кассовый ордер - №6 *", "Расходный кассовый ордер-Новы..."];

export default function App() {
  return (
    <Shell>
      <Global />
      <AppTitle>
        <OneC size={16} />
        <h1>1С:Предприятие - Бух. учет, бел.адап. Мисофт, редакция 4.5: ОАО "Минчанка"</h1>
        <WindowControls kinds={["min", "restore", "close"]} />
      </AppTitle>
      <MenuBar>{menu.map((m) => <a href="#" key={m}>{m}</a>)}</MenuBar>
      <ToolRow>
        <Band>
          <Tools list={main1} />
          <ComboBox>
            <input aria-label="Поиск" />
            <button type="button" aria-label="История поиска"><Arrow /></button>
          </ComboBox>
          <Tools list={main2} />
        </Band>
        <Band>
          <Tools list={main3} />
          <MemButton type="button">M</MemButton>
          <MemButton type="button">M+</MemButton>
          <MemButton type="button">M−</MemButton>
        </Band>
      </ToolRow>
      <ToolRow>
        <Band><Tools list={main4} /></Band>
      </ToolRow>

      <Desktop>
        <BankWindow />
        <BookWindow />
        <OrderWindow
          id="o4" x={177} y={231} title="Расходный кассовый ордер - №4 *"
          tools={["insert", "add", "del", "storeOff", "dkDoc", "dk", "from", "to", "azOff", "zaOff", "helpDoc", "helpPtr"]}
          number="№4" account="71 .1 ." third="идыРасходовПоАвансовымОтчетам" to="Толкач Евгений Георгиевич" basis="" enclosure=""
          by="паспорту МР №879723, выдан Заводское РОВД г. Минска 13.05.2005" sum="370,000.00" move="Выдача под авансовый отчет" picked="move" gridHeight={36}
        />
        <OrderWindow
          id="onew" x={429} y={71} title="Расходный кассовый ордер-Новый *" active
          tools={["insertOff", "addOff", "delOff", "store", "dkDocOff", "dkOff", "fromOff", "toOff", "azOff", "zaOff", "helpDoc", "helpPtr"]}
          number="№66" account="70 .1 ." to="" basis="На выплату заработной платы" enclosure="Платёжная ведомость №1"
          by="паспорту  №, выдан  0 г." sum="3,120,000.00" move="Выплата зарплаты" picked="sum" gridHeight={40}
        />
        <Tip role="tooltip">Сохранить и закрыть документ (Ctrl+Enter)</Tip>
        <MiniRow>
          {[1, 2].map((n) => (
            <Mini key={n}>
              <MiniCaption>
                <DocIcon />
                <h2>Приходный ...</h2>
                <WindowControls kinds={["restore", "max", "close"]} />
              </MiniCaption>
            </Mini>
          ))}
        </MiniRow>
      </Desktop>

      <TabBar>
        {tabs.map((t, i) => (
          <Tab type="button" key={t} $on={i === 5}>{i === 2 ? <BooksIcon /> : <DocIcon />}{t}</Tab>
        ))}
      </TabBar>
      <Status>
        <p>Для получения подсказки нажмите F1</p>
        <StatusCell $w={26} />
        <StatusCell $w={28} />
        <StatusCell $w={151}>ТА: 01.01.10  00:00:00</StatusCell>
        <StatusCell $w={151}>БИ: 4 квартал 2015 г.</StatusCell>
        <StatusCell $w={151}>ТП:</StatusCell>
      </Status>
      <TaskBar>
        <Start type="button">
          <Svg width="16" height="16" viewBox="0 0 16 16">
            <path d="M2 3c2-1 4-1 6 0L7 8C5 7 3 7 1 8z" fill="#f05a20" />
            <path d="M9 3c2 1 4 1 6 0l-1 5c-2 1-4 1-6 0z" fill="#7ab828" />
            <path d="M1 9c2-1 4-1 6 0l-1 5c-2-1-4-1-6 0z" fill="#2a86d8" />
            <path d="M8 9c2 1 4 1 6 0l-1 5c-2 1-4 1-6 0z" fill="#f8c018" />
          </Svg>
          Пуск
        </Start>
        <Bar $m="0 8px 0 7px" />
        <Launch type="button" aria-label="Экранная клавиатура">
          <Svg width="32" height="32" viewBox="0 0 32 32">
            <path d="M11 27l9-4 6 4-8 4c-4 0-6-1-7-4z" fill="#d8dade" stroke="#b8bcc4" />
            <path d="M17 19l6-1 1 6-6 1z" fill="#b8bcc4" />
            <path d="M7 1l23 3-3 18-17-2z" fill="#1848b8" stroke="#d0d8e8" />
            <path d="M8 2l20 3-10 8z" fill="#4a80e8" />
            <path d="M1 8h21v9H1z" fill="#3a90e0" stroke="#2a68c0" />
            <path d="M3 10h17M3 12h17M3 14h17" stroke="#fff" strokeDasharray="2 1" />
          </Svg>
        </Launch>
        <Launch type="button" aria-label="Проводник">
          <Svg width="34" height="32" viewBox="0 0 34 32">
            <path d="M2 5l2-3h8l2 3h17v23H2z" fill="#f0d070" stroke="#b89838" />
            <path d="M12 4h8l2 3h9v4H12z" fill="#f8e8a8" stroke="#c8a848" />
            <path d="M2 9h13l2-2h15v21H2z" fill="#fbe8a0" stroke="#c8a848" />
            <path d="M5 3h4" stroke="#30b030" strokeWidth="2" />
            <path d="M14 5h4" stroke="#d04020" strokeWidth="2" />
            <path d="M21 7h5" stroke="#4090e0" strokeWidth="2" />
            <path d="M6 31V21l3-3h16l3 3v10h-5v-6H11v6z" fill="#9cd8f0" stroke="#58a8d0" />
          </Svg>
        </Launch>
        <Launch type="button" aria-label="Документ">
          <Svg width="28" height="32" viewBox="-0.5 -0.5 28 32" shapeRendering="crispEdges" fill="#fff" stroke="#000">
            <path d="M1 0h19l6 6v25h-25z" stroke="#848284" />
            <path d="M20 0v6h6" stroke="#000" />
            <path d="M5 8h17v15h-17z" />
            <path d="M5 8h17v2h-17z" fill="#000084" stroke="#000084" />
            <path d="M8 15h2v3h-2z" fill="#f00" stroke="#f00" />
            <path d="M13 15h1v3h-1z" stroke="#00f" />
            <path d="M17 15h2v3h-2z" fill="#080" stroke="#080" />
          </Svg>
        </Launch>
        <Launch type="button" $on aria-label="1С:Предприятие V7"><OneC size={32} /></Launch>
        <Filler />
        <Bar $m="0" />
        <Lang>RU</Lang>
        <Bar $m="0" />
        <Tray>
          <Svg width="16" height="16" viewBox="0 0 16 16">
            <circle cx="8" cy="8" r="7" fill="#f89a18" stroke="#e07808" />
            <path d="M8 3l4 4H9v5H7V7H4z" fill="#fff" />
          </Svg>
          <Svg width="16" height="16" viewBox="0 0 16 16" fill="#fff" stroke="#787878">
            <path d="M1 1h2v14H1z" />
            <path d="M3 2l5 1 1 2h6l-1 5h-5l-1-2H3z" />
          </Svg>
          <Svg width="17" height="16" viewBox="0 0 17 16" fill="#e8e8e8" stroke="#606060">
            <path d="M4 2h11v9H4z" />
            <path d="M1 1v4h5V1M3 5v9h4M2 0v2M5 0v2" fill="none" />
            <path d="M11 6l5 9H6z" fill="#ffd820" stroke="#c89800" />
            <path d="M11 9v3M11 13v1" stroke="#000" />
          </Svg>
          <Svg width="17" height="16" viewBox="0 0 17 16" fill="#fff" stroke="#787878">
            <path d="M1 5h2l4-4v12L3 9H1z" />
            <path d="M9 3c1 2 1 4 0 6" fill="none" />
            <circle cx="12" cy="11" r="4" fill="#e03030" stroke="#b01010" />
            <path d="M10 9l4 4M14 9l-4 4" stroke="#fff" />
          </Svg>
          <time dateTime="2015-11-28T13:12">13:12<br />28.11.2015</time>
          <Svg width="16" height="13" viewBox="0 0 16 13">
            <path d="M0 1h16v11H0z" fill="#2868c8" />
            <path d="M1 2h14L4 9z" fill="#6aa8f0" />
            <path d="M0 10h16v2H0z" fill="#183060" />
            <path d="M0 8h4v3H0z" fill="#48b848" />
          </Svg>
        </Tray>
      </TaskBar>
    </Shell>
  );
}
